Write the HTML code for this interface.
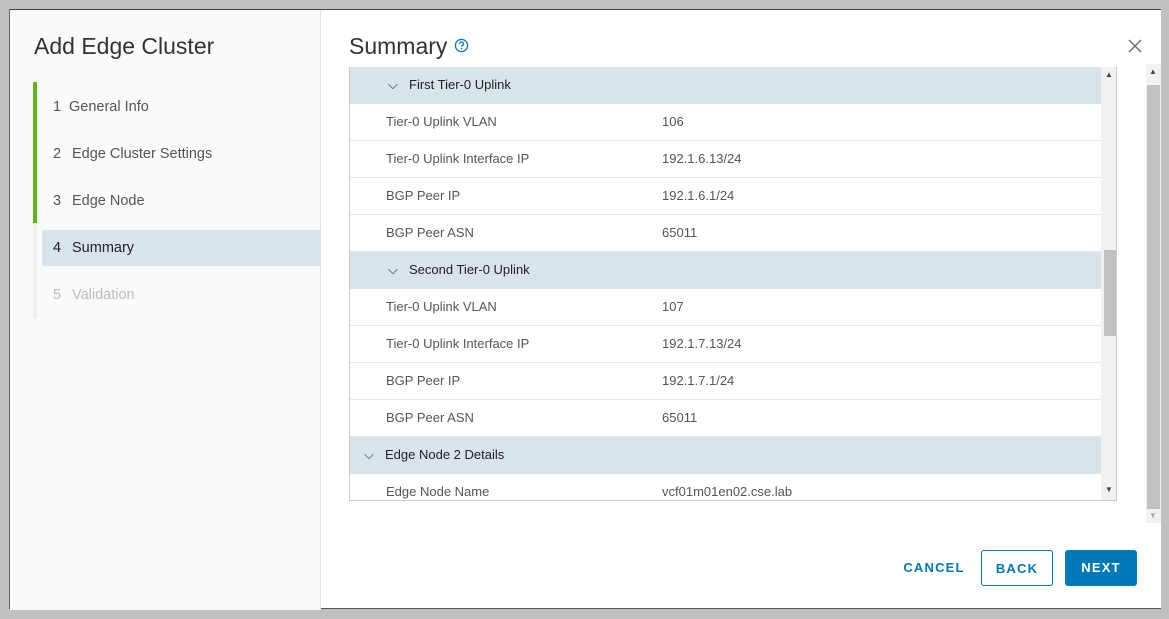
<!DOCTYPE html><html><head><style>
*{box-sizing:border-box;margin:0;padding:0}
body{width:1169px;height:619px;background:#c0c0c0;font-family:"Liberation Sans",sans-serif;position:relative;overflow:hidden}
.dlg{position:absolute;left:9px;top:9px;width:1152px;height:600px;background:#fff;border-top:1px solid #444;border-left:1px solid #666;border-bottom:1px solid #555}
.left{position:absolute;left:0;top:0;width:311px;height:600px;background:#fafafa;border-right:1px solid #e4e4e4}
h1{position:absolute;left:24px;top:23px;font-size:23px;font-weight:400;color:#333}
.step{position:absolute;left:32px;width:279px;height:36px;line-height:36px;font-size:14.5px;color:#555;padding-left:11px}
.step b{display:inline-block;width:19px;font-weight:400}
.bar{position:absolute;left:23px;width:4px}
h2{position:absolute;left:339px;top:23px;font-size:23px;font-weight:400;color:#333}
.tbl{position:absolute;left:339px;top:57px;width:768px;height:434px;border:1px solid #ccc;border-top:none;overflow:hidden;background:#fff}
.row{position:absolute;left:0;width:751px;height:37px;line-height:36px;font-size:13px;color:#555;border-bottom:1px solid #e8e8e8}
.hd{background:#d9e3ea;color:#222;border-bottom:none}
.row span{position:absolute}
.sb{position:absolute;background:#f1f1f1}
.btn{position:absolute;top:540px;height:36px;line-height:36px;font-size:13px;font-weight:700;letter-spacing:1.2px;text-align:center;border-radius:3px}
</style></head><body><div class="dlg">
<div class="left">
<h1>Add Edge Cluster</h1>
<div class="bar" style="top:72px;height:141px;background:#5eb715"></div>
<div class="bar" style="top:213px;height:96px;background:#eee"></div>
<div class="step" style="top:79px"><b style="width:16px">1</b>General Info</div>
<div class="step" style="top:126px"><b>2</b>Edge Cluster Settings</div>
<div class="step" style="top:173px"><b>3</b>Edge Node</div>
<div class="step" style="top:220px;background:#d9e3ea;color:#222"><b>4</b>Summary</div>
<div class="step" style="top:267px;color:#bbb"><b>5</b>Validation</div>
</div>
<h2>Summary <svg width="15" height="15" viewBox="0 0 16 16" style="vertical-align:1px"><circle cx="8" cy="8" r="6.5" fill="none" stroke="#0079b8" stroke-width="1.4"/><path d="M6 6.3a2 2 0 1 1 2.6 1.9c-.5.2-.6.5-.6 1.1" fill="none" stroke="#0079b8" stroke-width="1.3"/><circle cx="8" cy="11.3" r=".8" fill="#0079b8"/></svg></h2>
<svg style="position:absolute;left:1118px;top:29px" width="14" height="14"><path d="M1 1L13 13M13 1L1 13" stroke="#666" stroke-width="1.3"/></svg>
<div class="tbl">
<div class="row hd" style="top:0"><span style="left:38px">⌵</span><span style="left:59px">First Tier-0 Uplink</span></div>
<div class="row" style="top:37px"><span style="left:36px">Tier-0 Uplink VLAN</span><span style="left:312px">106</span></div>
<div class="row" style="top:74px"><span style="left:36px">Tier-0 Uplink Interface IP</span><span style="left:312px">192.1.6.13/24</span></div>
<div class="row" style="top:111px"><span style="left:36px">BGP Peer IP</span><span style="left:312px">192.1.6.1/24</span></div>
<div class="row" style="top:148px"><span style="left:36px">BGP Peer ASN</span><span style="left:312px">65011</span></div>
<div class="row hd" style="top:185px"><span style="left:38px">⌵</span><span style="left:59px">Second Tier-0 Uplink</span></div>
<div class="row" style="top:222px"><span style="left:36px">Tier-0 Uplink VLAN</span><span style="left:312px">107</span></div>
<div class="row" style="top:259px"><span style="left:36px">Tier-0 Uplink Interface IP</span><span style="left:312px">192.1.7.13/24</span></div>
<div class="row" style="top:296px"><span style="left:36px">BGP Peer IP</span><span style="left:312px">192.1.7.1/24</span></div>
<div class="row" style="top:333px"><span style="left:36px">BGP Peer ASN</span><span style="left:312px">65011</span></div>
<div class="row hd" style="top:370px"><span style="left:14px">⌵</span><span style="left:35px">Edge Node 2 Details</span></div>
<div class="row" style="top:407px"><span style="left:36px">Edge Node Name</span><span style="left:312px">vcf01m01en02.cse.lab</span></div>
<div class="sb" style="left:751px;top:0;width:16px;height:434px"></div>
<div style="position:absolute;left:754px;top:183px;width:12px;height:86px;background:#c1c1c1"></div>
<div style="position:absolute;left:755px;top:3px;font-size:8px;color:#444">▲</div>
<div style="position:absolute;left:755px;top:418px;font-size:8px;color:#444">▼</div>
</div>
<div class="sb" style="left:1136px;top:54px;width:15px;height:459px"></div>
<div style="position:absolute;left:1137px;top:75px;width:13px;height:424px;background:#c1c1c1"></div>
<div style="position:absolute;left:1139px;top:57px;font-size:8px;color:#444">▲</div>
<div style="position:absolute;left:1139px;top:501px;font-size:8px;color:#aaa">▼</div>
<div class="btn" style="left:884px;width:80px;color:#0079b8">CANCEL</div>
<div class="btn" style="left:971px;width:72px;border:1px solid #0079b8;color:#0079b8">BACK</div>
<div class="btn" style="left:1055px;width:72px;background:#0079b8;color:#fff">NEXT</div>
</div></body></html>
